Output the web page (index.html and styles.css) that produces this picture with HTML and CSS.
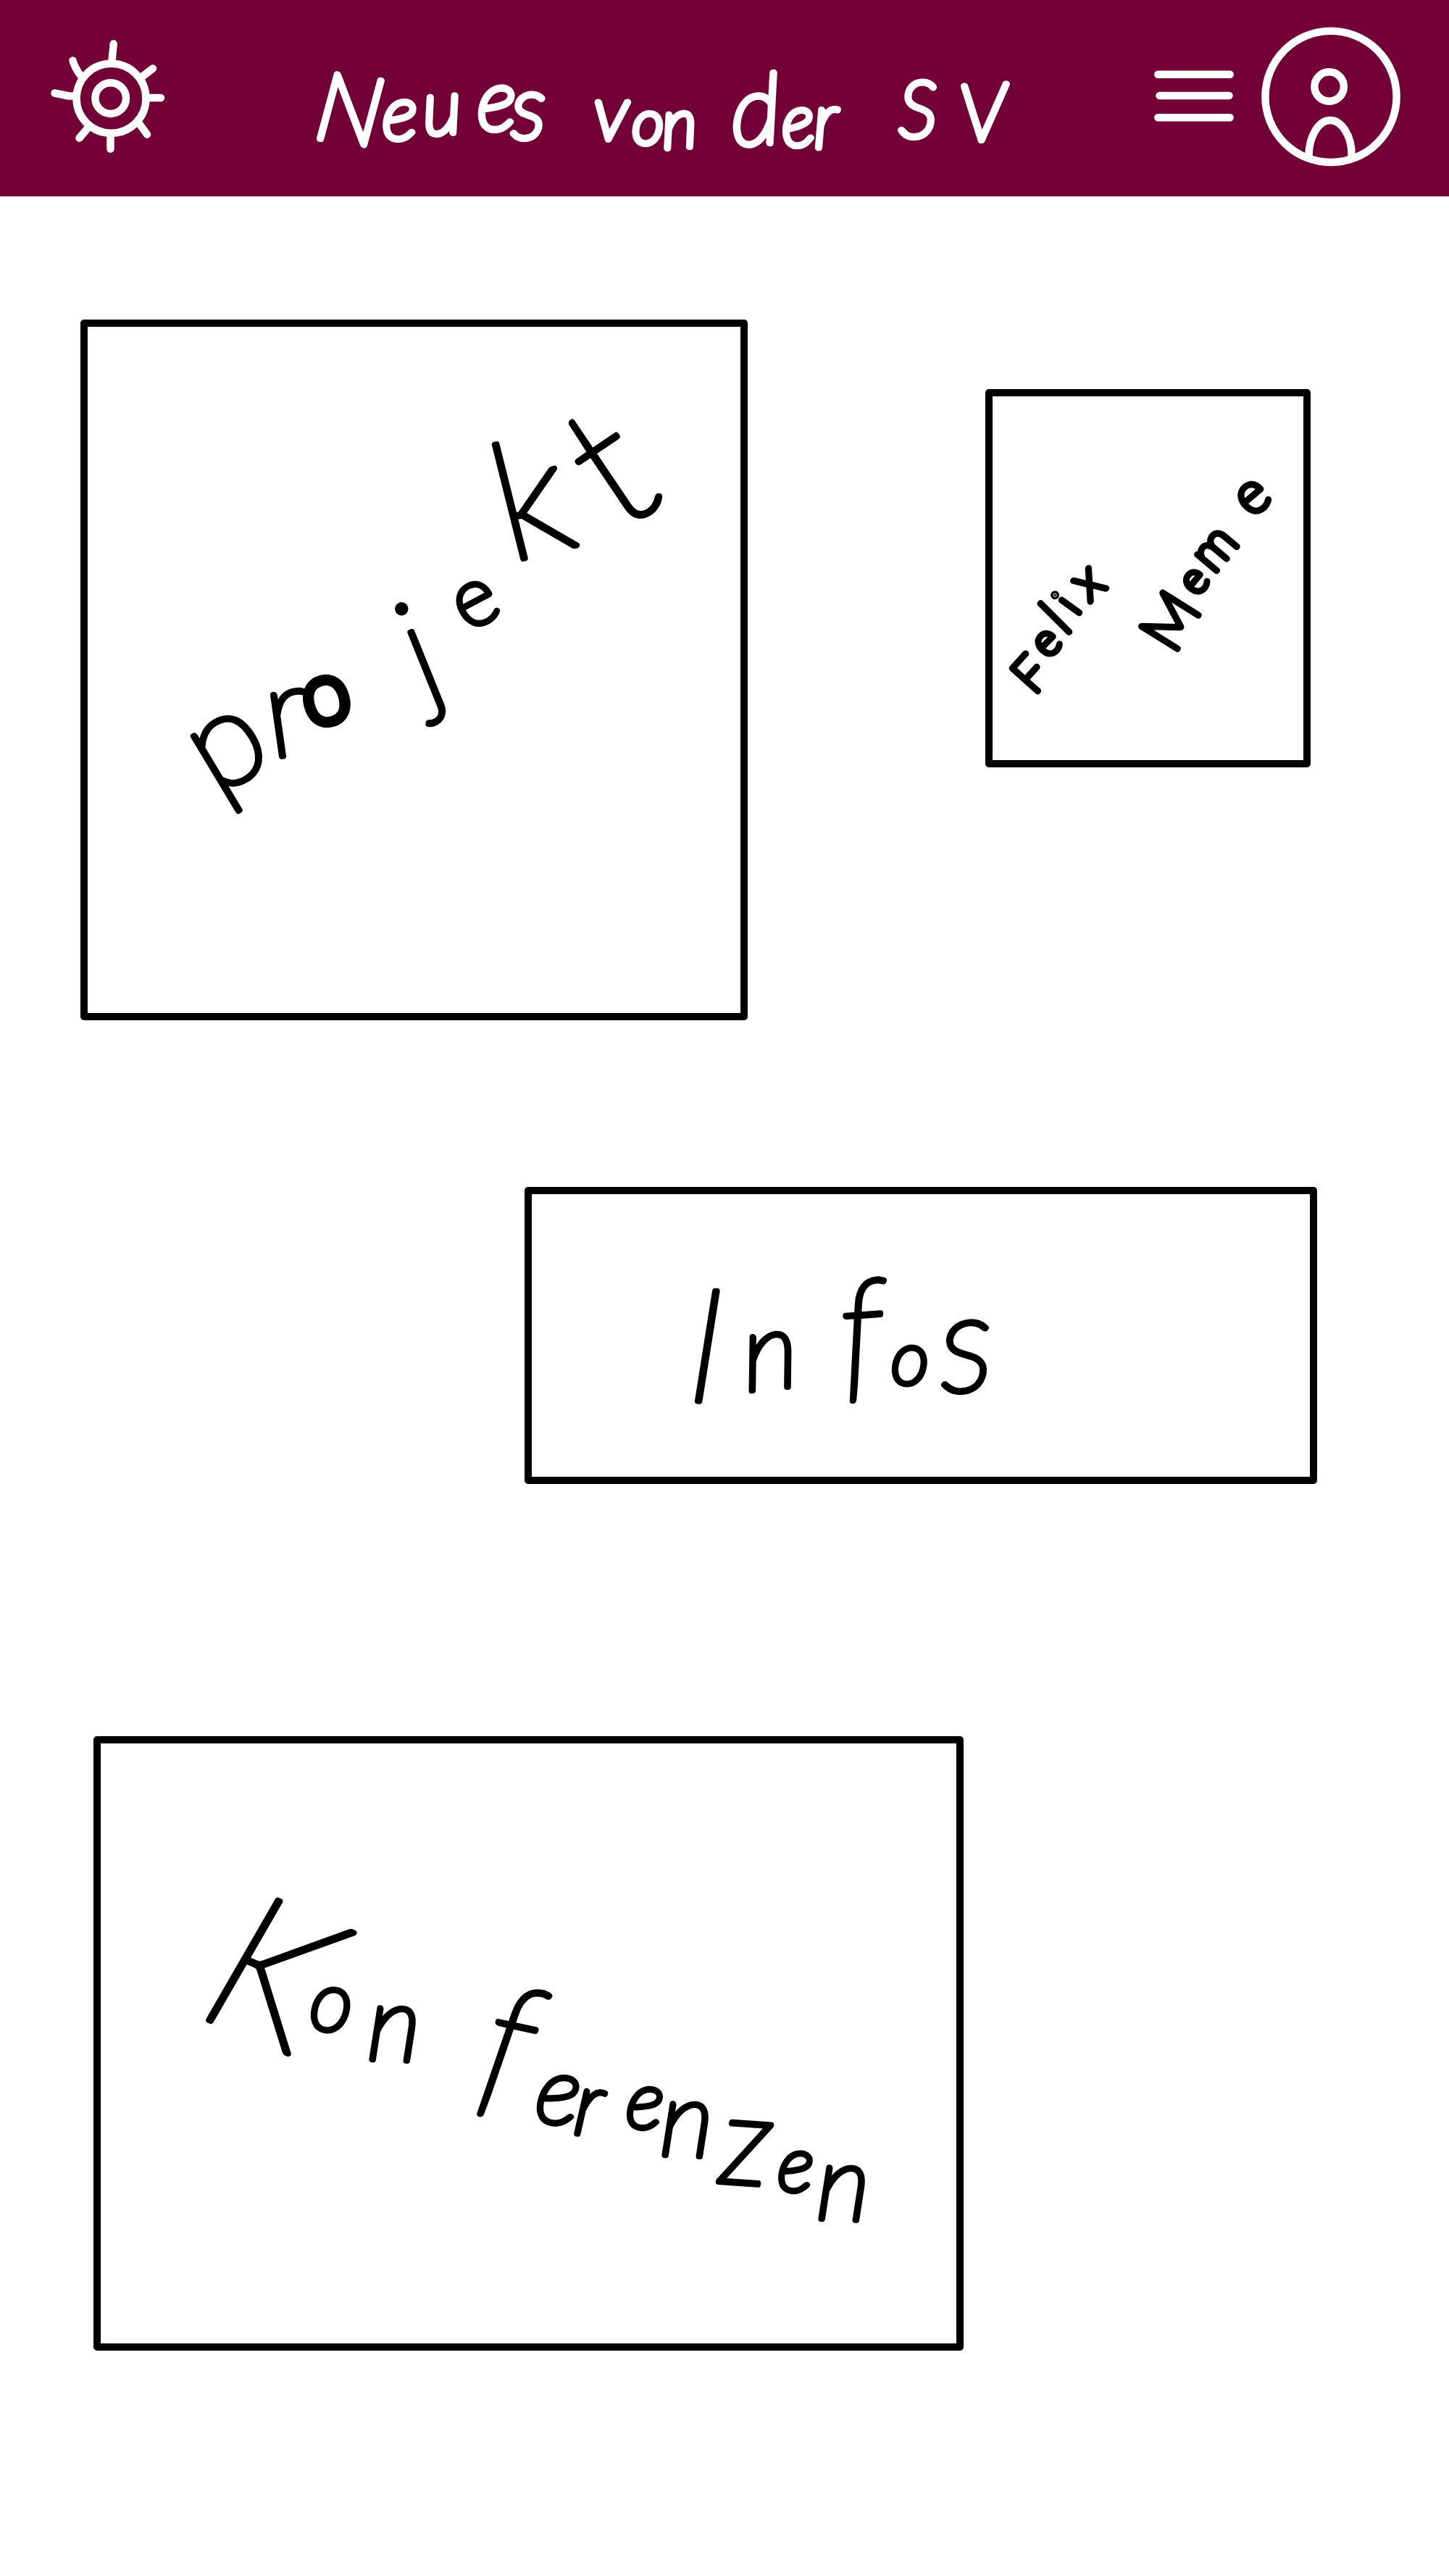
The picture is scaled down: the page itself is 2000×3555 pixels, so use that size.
FILE: index.html
```html
<!DOCTYPE html>
<html lang="de">
<head>
<meta charset="utf-8">
<title>Neues von der SV</title>
<link rel="stylesheet" href="styles.css">
</head>
<body>
<header class="topbar">
  <svg class="icon-gear" viewBox="70 54 160 158" aria-hidden="true">
    <circle cx="153.500" cy="135.800" r="48"/>
    <circle cx="152.700" cy="135.600" r="21.300"/>
    <path d="M156.700 60.500 154.500 84M100.500 83.500Q103 93 111 104M211 94.500 196 106M75.500 128.500 95 132.500H105M222 135H201M109.500 190.500 121 177M203 185.500 191 169M152.500 205.500V188"/>
  </svg>
  <h1 class="title">
    <svg class="title-text" viewBox="430 54 970 158">
      <text class="ink"><tspan font-size="130" x="432" y="190" rotate="8">N</tspan><tspan font-size="104" x="528" y="192">e</tspan><tspan font-size="104" x="586" y="186" rotate="-4">u</tspan><tspan font-size="116" x="659" y="179">e</tspan><tspan font-size="122" x="706" y="191">s</tspan> <tspan font-size="104" x="820" y="192">v</tspan><tspan font-size="84" x="873" y="198">o</tspan><tspan font-size="94" x="916" y="205" rotate="-4">n</tspan> <tspan font-size="134" x="1012" y="201" rotate="-4">d</tspan><tspan font-size="98" x="1082" y="203" rotate="-6">e</tspan><tspan font-size="106" x="1124" y="204" rotate="-2">r</tspan> <tspan font-size="106" x="1241" y="189">S</tspan><tspan font-size="108" x="1327" y="195" rotate="-3">V</tspan></text>
    </svg>
  </h1>
  <svg class="icon-menu" viewBox="1593 94 110 78" aria-hidden="true">
    <path d="M1598.300 102.800H1697.700M1600.500 132H1696.500M1598.300 162.300H1697.700"/>
  </svg>
  <svg class="icon-user" viewBox="1741 37 193 193" aria-hidden="true">
    <circle cx="1837" cy="133.400" r="90.600"/>
    <circle cx="1834.600" cy="119.500" r="20.200"/>
    <path d="M1806.500 214C1807 188 1820 166 1836 166S1866 188 1865.500 214"/>
  </svg>
</header>
<main class="board">
  <div class="row">
    <section class="card card-projekt">
      <svg viewBox="121 451 901 947">
        <text class="ink"><tspan font-size="180" x="298" y="1100" rotate="-31">p</tspan><tspan font-size="175" x="373" y="1046" rotate="-8">r</tspan><tspan class="heavy" font-size="118" x="427" y="1004" rotate="-15">o</tspan><tspan font-size="190" x="584" y="966" rotate="-22">j</tspan><tspan font-size="112" x="645" y="872" rotate="-28">e</tspan><tspan font-size="225" x="702" y="776" rotate="-14">k</tspan><tspan font-size="240" x="854" y="734" rotate="-34">t</tspan></text>
      </svg>
    </section>
    <section class="card card-meme">
      <svg viewBox="1370 547 429 502">
        <text class="ink"><tspan font-size="68" x="1427" y="960" rotate="-48">F</tspan><tspan font-size="60" x="1446" y="910" rotate="-45">e</tspan><tspan font-size="78" x="1470" y="878" rotate="-45">l</tspan><tspan font-size="62" x="1486" y="851" rotate="-54">i</tspan><tspan font-size="76" x="1503" y="832" rotate="-40">x</tspan> <tspan font-size="84" x="1620" y="904" rotate="-58">M</tspan><tspan font-size="58" x="1652" y="824" rotate="-50">e</tspan><tspan font-size="72" x="1675" y="793" rotate="-50">m</tspan><tspan font-size="78" x="1727" y="715" rotate="-40">e</tspan></text>
      </svg>
    </section>
  </div>
  <section class="card card-infos">
    <svg viewBox="734 1648 1074 390">
      <text class="ink"><tspan font-size="218" x="947" y="1933" rotate="2">I</tspan><tspan font-size="150" x="1030" y="1920" rotate="-6">n</tspan><tspan font-size="198" x="1164" y="1909" rotate="-4">f</tspan><tspan font-size="102" x="1230" y="1910">o</tspan><tspan font-size="190" x="1300" y="1921" rotate="-3">s</tspan></text>
    </svg>
  </section>
  <section class="card card-konferenzen">
    <svg viewBox="139 2406 1181 828">
      <text class="ink"><tspan font-size="270" x="270" y="2780" rotate="23">K</tspan><tspan font-size="114" x="426" y="2800" rotate="4">o</tspan><tspan font-size="145" x="506" y="2842" rotate="2">n</tspan><tspan font-size="218" x="656" y="2888" rotate="12">f</tspan><tspan font-size="130" x="736" y="2926" rotate="8">e</tspan><tspan font-size="122" x="790" y="2944" rotate="6">r</tspan><tspan font-size="110" x="862" y="2934" rotate="6">e</tspan><tspan font-size="145" x="910" y="2974" rotate="2">n</tspan><tspan font-size="170" x="992" y="3011" rotate="4">z</tspan><tspan font-size="106" x="1072" y="3022" rotate="4">e</tspan><tspan font-size="145" x="1126" y="3062" rotate="2">n</tspan></text>
    </svg>
  </section>
</main>
</body>
</html>
```
FILE: styles.css
```css
* { box-sizing: border-box; }

body {
  margin: 0;
  background: #fff;
  font-family: Lato, "Open Sans", sans-serif;
}

svg { display: block; overflow: visible; }

.topbar {
  display: flex;
  align-items: flex-start;
  height: 271.3px;
  background: #720036;
}

.topbar > svg {
  flex: none;
  fill: none;
  stroke: #fff;
  stroke-width: 10.5;
  stroke-linecap: round;
  stroke-linejoin: round;
}

.icon-gear { width: 160px; height: 158px; margin: 54px 0 0 70px; }
.title { margin: 54px 0 0 200px; flex: none; font-size: 100px; font-weight: 200; }
.title-text { width: 970px; height: 158px; }
.icon-menu { width: 110px; height: 78px; margin: 94px 0 0 193px; }
.icon-user { width: 193px; height: 193px; margin: 37px 0 0 38px; }

/* Hairline lettering thickened to an even pen line with round ends */
.ink {
  font-family: Lato, "Open Sans", sans-serif;
  font-weight: 200;
  fill: #000;
  stroke: #000;
  stroke-width: 8;
  stroke-linejoin: round;
}

.ink .heavy { stroke-width: 14; }

.title .ink { fill: #fff; stroke: #fff; stroke-width: 9; font-style: italic; }
.card-meme .ink { stroke-width: 8.500; }
.card-infos .ink, .card-konferenzen .ink { font-style: italic; }

.board { padding-top: 169.7px; }
.row { display: flex; align-items: flex-start; padding-left: 111px; }

.card {
  border: 10px solid #000;
  border-radius: 5px;
}

.card svg { width: 100%; height: 100%; }

.card-projekt { width: 921px; height: 967px; }
.card-meme { width: 449px; height: 522px; margin: 96px 0 0 328px; }
.card-infos { width: 1094px; height: 410px; margin: 230px 0 0 724px; }
.card-konferenzen { width: 1201px; height: 848px; margin: 348px 0 0 129px; }
```
